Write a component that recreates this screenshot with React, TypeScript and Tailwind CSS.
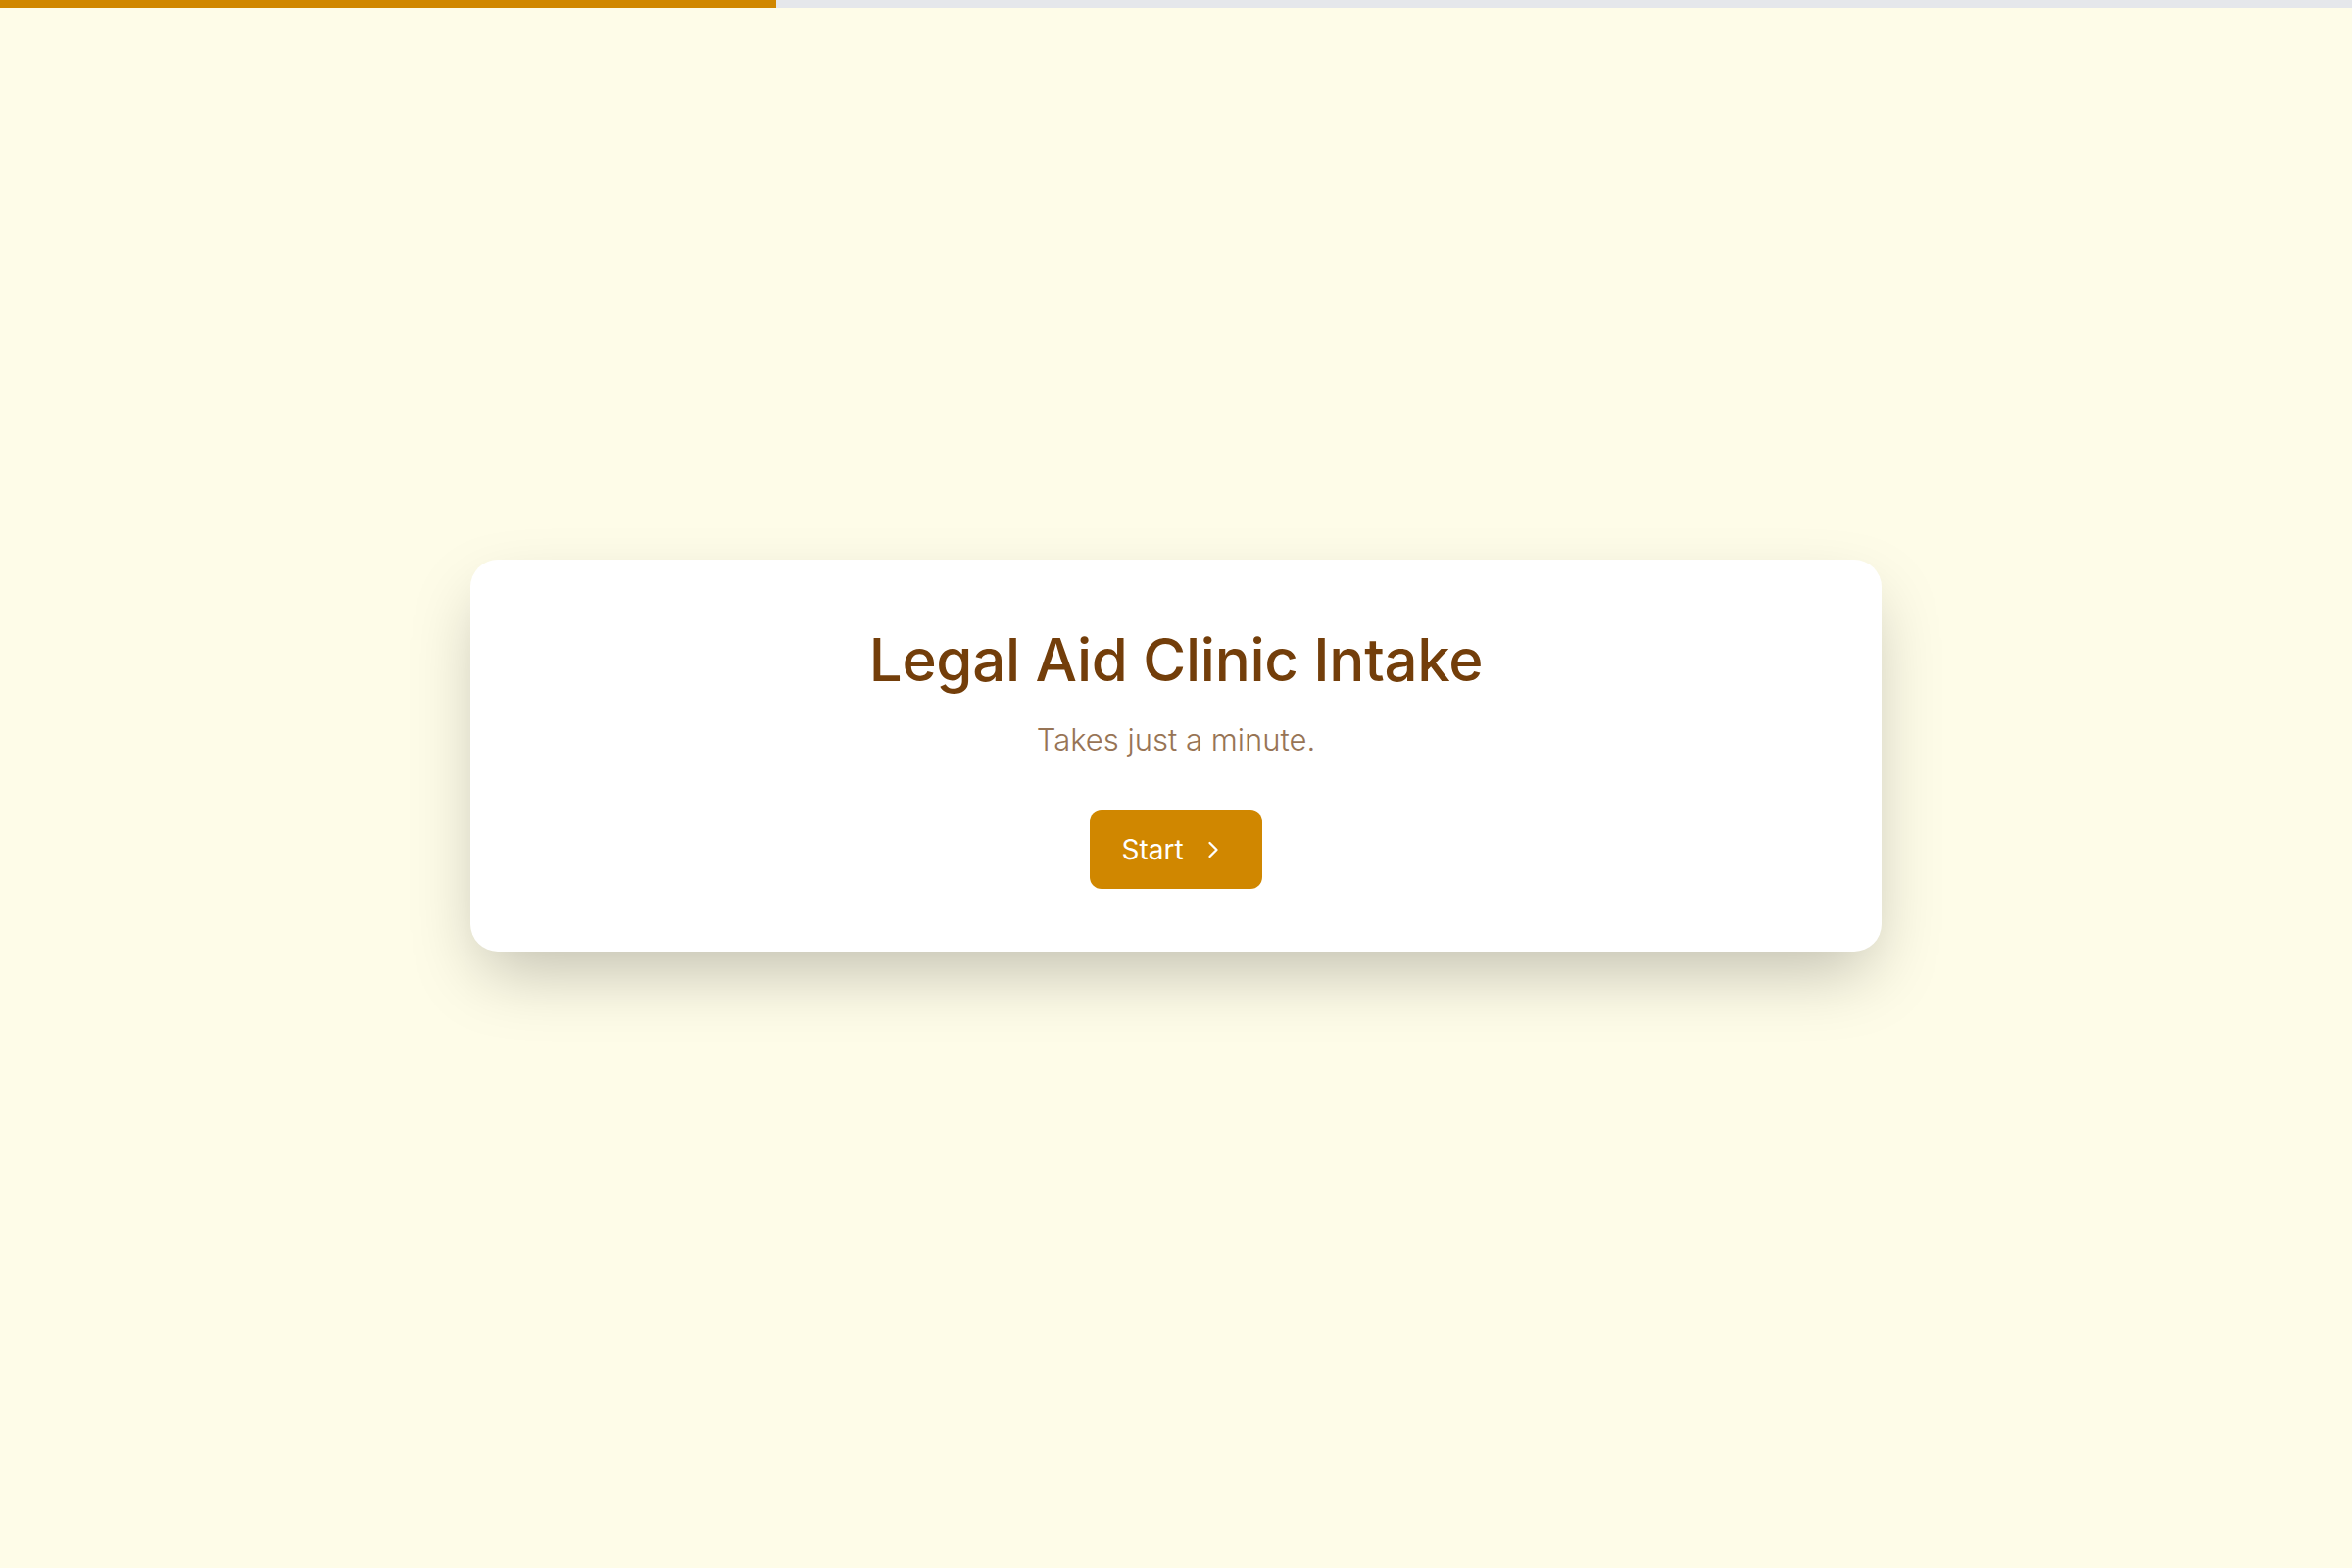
import React from 'react';
import { ChevronRight } from 'lucide-react';

const progress = 33;

const App: React.FC = () => {
  return (
    <div className="min-h-screen flex flex-col bg-yellow-50 font-['Inter','Liberation_Sans',sans-serif]">
      {/* PROGRESS BAR */}
      <div className="h-2 w-full bg-gray-200">
        <div className="h-full bg-yellow-600" style={{ width: `${progress}%` }} />
      </div>

      {/* INTRO CARD */}
      <main className="flex-1 flex items-center justify-center pb-[66px]">
        <div className="w-[1440px] bg-white rounded-[28px] shadow-[0_30px_70px_-12px_rgba(0,0,0,0.25)] pt-[72px] pb-16 flex flex-col items-center text-center">
          <h1 className="text-6xl leading-none font-medium tracking-[-0.005em] text-yellow-900">Legal Aid Clinic Intake</h1>
          <p className="mt-[34px] text-[31px] leading-9 font-light text-[#977455]">Takes just a minute.</p>
          <button className="mt-[54px] h-20 pl-8 pr-9 flex items-center gap-4 rounded-xl bg-yellow-600 text-white text-[28px] font-normal">
            Start
            <ChevronRight size={28} strokeWidth={2} />
          </button>
        </div>
      </main>
    </div>
  );
};

export default App;
